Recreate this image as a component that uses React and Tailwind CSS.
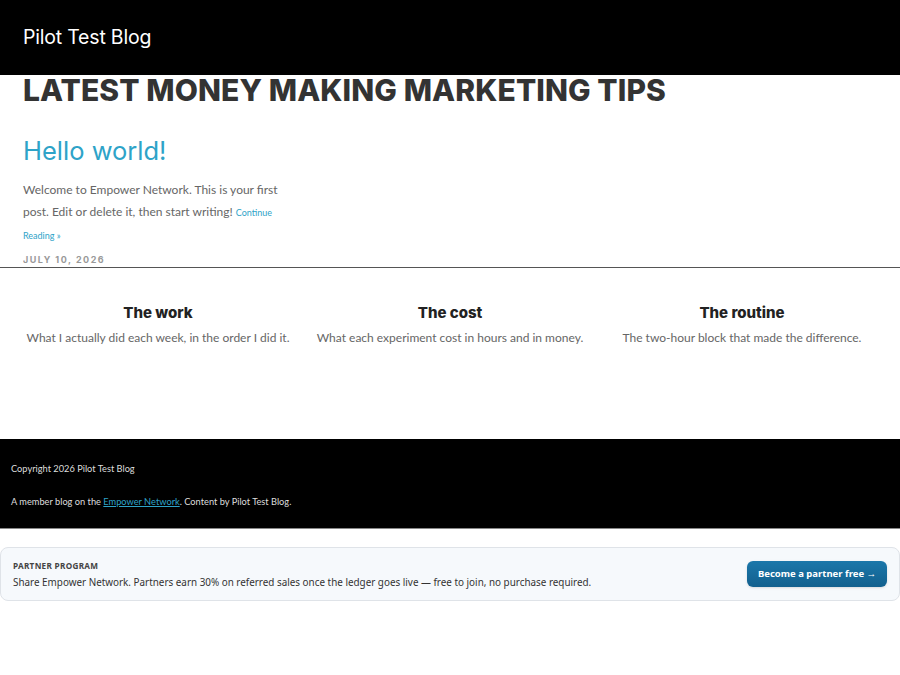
export default function App() {
  const heading = { fontFamily: '"Inter", "Open Sans", sans-serif' };
  const body = { fontFamily: 'Lato, "Open Sans", sans-serif' };
  const sys = { fontFamily: '"Noto Sans", "Open Sans", sans-serif' };
  const cols = [
    { t: "The work", d: "What I actually did each week, in the order I did it." },
    { t: "The cost", d: "What each experiment cost in hours and in money." },
    { t: "The routine", d: "The two-hour block that made the difference." },
  ];
  return (
    <div className="w-[900px] min-h-[675px] bg-white">
      <header className="bg-black h-[75px] flex items-center px-[23px]">
        <span className="text-white text-[19.5px] font-normal tracking-[-0.2px]" style={heading}>
          Pilot Test Blog
        </span>
      </header>
      <main className="px-[23px]">
        <h1 className="text-[#333333] text-[30px] font-extrabold leading-[30px] tracking-[0.1px]" style={heading}>
          LATEST MONEY MAKING MARKETING TIPS
        </h1>
        <h2 className="mt-[31px] text-[#2ea3c8] text-[25.5px] font-normal leading-[30px]" style={heading}>
          Hello world!
        </h2>
        <p className="mt-[13px] w-[262px] text-[#666666] text-[12px] leading-[22px]" style={body}>
          Welcome to Empower Network. This is your first post. Edit or delete it, then start writing!{" "}
          <a className="text-[#2ea3c8] text-[9px]" href="#">Continue Reading »</a>
        </p>
        <div className="mt-[7px] text-[#999999] text-[9px] font-bold tracking-[1.5px] leading-[12px] h-[13px] overflow-hidden" style={heading}>
          JULY 10, 2026
        </div>
      </main>
      <div className="h-px bg-[#555555]" />
      <section className="px-3 pt-[36px] grid grid-cols-3 h-[171px]">
        {cols.map((c) => (
          <div key={c.t} className="text-center">
            <div className="text-[#222222] text-[15px] font-extrabold leading-[18px]" style={heading}>{c.t}</div>
            <div className="mt-[8px] text-[#666666] text-[12px] leading-[16px]" style={body}>{c.d}</div>
          </div>
        ))}
      </section>
      <footer className="bg-black h-[90px] px-[11px] pt-[24px] border-b border-[#888888] text-[#dddddd] text-[9.25px]" style={body}>
        <div className="leading-[12px]">Copyright 2026 Pilot Test Blog</div>
        <div className="mt-[21px] leading-[12px]">
          A member blog on the{" "}
          <a href="#" className="text-[#2ea3c8] underline">Empower Network</a>. Content by Pilot Test Blog.
        </div>
      </footer>
      <div className="mt-[18px] border border-[#dfe3e8] rounded-lg bg-[#f6f9fc] h-[54px] flex items-center justify-between pl-3 pr-3" style={sys}>
        <div>
          <div className="text-[#444444] text-[8.2px] font-bold tracking-[0.3px] leading-[12px]">PARTNER PROGRAM</div>
          <div className="mt-[3px] text-[#333333] text-[9.9px] leading-[14px]">
            Share Empower Network. Partners earn 30% on referred sales once the ledger goes live — free to join, no purchase required.
          </div>
        </div>
        <a href="#" className="h-[26px] w-[140px] rounded-md bg-gradient-to-b from-[#1b77aa] to-[#12608e] text-white text-[9.5px] font-bold flex items-center justify-center shadow-sm">
          Become a partner free →
        </a>
      </div>
    </div>
  );
}
